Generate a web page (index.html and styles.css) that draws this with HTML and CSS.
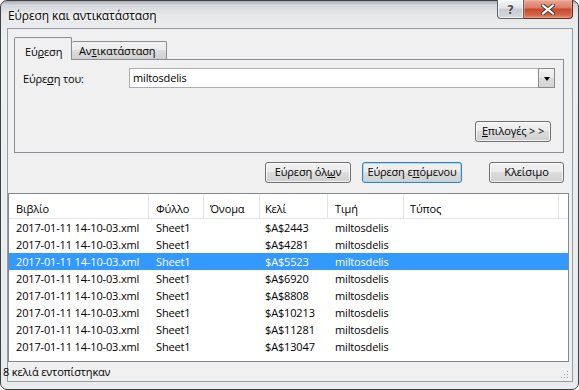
FILE: index.html
```html
<!DOCTYPE html>
<html lang="el">
<head>
<meta charset="utf-8">
<title>Εύρεση και αντικατάσταση</title>
<link rel="stylesheet" href="styles.css">
</head>
<body>
<div class="window">
  <div class="titlebar">
    <span class="title">Εύρεση και αντικατάσταση</span>
    <div class="caption">
      <div class="cap help"><span class="q">?</span></div>
      <div class="cap close">
        <svg width="14" height="11" viewBox="0 0 14 11">
          <path d="M2 1.5 L12 9.5 M12 1.5 L2 9.5" stroke="#3a3a3a" stroke-width="4" stroke-linecap="square" fill="none"/>
          <path d="M2 1.5 L12 9.5 M12 1.5 L2 9.5" stroke="#ffffff" stroke-width="2.2" stroke-linecap="square" fill="none"/>
        </svg>
      </div>
    </div>
  </div>
  <div class="client">
    <div class="tabs">
      <div class="tab active">Εύ<u>ρ</u>εση</div>
      <div class="tab inactive">Αν<u>τ</u>ικατάσταση</div>
    </div>
    <div class="panel">
      <div class="find-row">
        <span class="label">Εύρε<u>σ</u>η του:</span>
        <div class="combo">
          <span class="combo-text">miltosdelis</span>
          <span class="drop"><span class="tri"></span></span>
        </div>
      </div>
      <div class="options-row">
        <div class="btn btn-options"><u>Ε</u>πιλογές &gt; &gt;</div>
      </div>
    </div>
    <div class="actions">
      <div class="btn btn-all">Εύρεση όλ<u>ω</u>ν</div>
      <div class="btn btn-next default">Εύρεση ε<u>π</u>όμενου</div>
      <div class="btn btn-close">Κλείσιμο</div>
    </div>
    <div class="list">
      <div class="row header">
        <div class="cell">Βιβλίο</div>
        <div class="cell">Φύλλο</div>
        <div class="cell">Όνομα</div>
        <div class="cell">Κελί</div>
        <div class="cell">Τιμή</div>
        <div class="cell">Τύπος</div>
        <div class="cell last"></div>
      </div>
      <div class="row item"><div class="cell">2017-01-11 14-10-03.xml</div><div class="cell">Sheet1</div><div class="cell"></div><div class="cell">$A$2443</div><div class="cell">miltosdelis</div><div class="cell"></div><div class="cell"></div></div>
      <div class="row item"><div class="cell">2017-01-11 14-10-03.xml</div><div class="cell">Sheet1</div><div class="cell"></div><div class="cell">$A$4281</div><div class="cell">miltosdelis</div><div class="cell"></div><div class="cell"></div></div>
      <div class="row item selected"><div class="cell">2017-01-11 14-10-03.xml</div><div class="cell">Sheet1</div><div class="cell"></div><div class="cell">$A$5523</div><div class="cell">miltosdelis</div><div class="cell"></div><div class="cell"></div></div>
      <div class="row item"><div class="cell">2017-01-11 14-10-03.xml</div><div class="cell">Sheet1</div><div class="cell"></div><div class="cell">$A$6920</div><div class="cell">miltosdelis</div><div class="cell"></div><div class="cell"></div></div>
      <div class="row item"><div class="cell">2017-01-11 14-10-03.xml</div><div class="cell">Sheet1</div><div class="cell"></div><div class="cell">$A$8808</div><div class="cell">miltosdelis</div><div class="cell"></div><div class="cell"></div></div>
      <div class="row item"><div class="cell">2017-01-11 14-10-03.xml</div><div class="cell">Sheet1</div><div class="cell"></div><div class="cell">$A$10213</div><div class="cell">miltosdelis</div><div class="cell"></div><div class="cell"></div></div>
      <div class="row item"><div class="cell">2017-01-11 14-10-03.xml</div><div class="cell">Sheet1</div><div class="cell"></div><div class="cell">$A$11281</div><div class="cell">miltosdelis</div><div class="cell"></div><div class="cell"></div></div>
      <div class="row item"><div class="cell">2017-01-11 14-10-03.xml</div><div class="cell">Sheet1</div><div class="cell"></div><div class="cell">$A$13047</div><div class="cell">miltosdelis</div><div class="cell"></div><div class="cell"></div></div>
    </div>
    <div class="status">
      <span class="status-text">8 κελιά εντοπίστηκαν</span>
      <svg class="grip" width="8" height="8" viewBox="0 0 8 8">
        <rect x="6" y="0" width="1" height="1" fill="#9a9a9a"/>
        <rect x="3" y="3" width="1" height="1" fill="#9a9a9a"/>
        <rect x="6" y="3" width="1" height="1" fill="#9a9a9a"/>
        <rect x="0" y="6" width="1" height="1" fill="#9a9a9a"/>
        <rect x="3" y="6" width="1" height="1" fill="#9a9a9a"/>
        <rect x="6" y="6" width="1" height="1" fill="#9a9a9a"/>
      </svg>
    </div>
  </div>
  <div class="bottom-frame"></div>
</div>
</body>
</html>
```
FILE: styles.css
```css
* { box-sizing: border-box; }
html, body { margin: 0; padding: 0; }
body {
  width: 579px;
  height: 390px;
  background: #ffffff;
  font-family: "Open Sans", "Noto Sans", sans-serif;
  font-size: 11px;
  letter-spacing: -0.15px;
  color: #000;
  overflow: hidden;
}
u { text-decoration: underline; text-underline-offset: 1px; }

.window {
  width: 579px;
  height: 390px;
  border: 1px solid #3e4145;
  border-radius: 7px;
  background: linear-gradient(to bottom, #a7abb0 0px, #d4d7db 4px, #e6e8ea 14px, #eceef0 40px, #e9ebed 100%);
  display: flex;
  flex-direction: column;
}

.titlebar {
  height: 27px;
  flex: none;
  display: flex;
  align-items: flex-start;
  padding-left: 7px;
}
.title {
  margin-top: 7px;
  font-size: 12px;
  line-height: 16px;
  letter-spacing: -0.1px;
  text-shadow: 0 0 5px #ffffff, 0 0 2px #ffffff;
}
.caption {
  margin-left: auto;
  margin-right: 5px;
  margin-top: -1px;
  display: flex;
}
.cap {
  height: 19px;
  display: flex;
  align-items: center;
  justify-content: center;
}
.help {
  width: 27px;
  border: 1px solid #5e6368;
  border-top: none;
  border-radius: 0 0 0 4px;
  background: linear-gradient(to bottom, #f4f5f6 0%, #e1e4e7 45%, #c6cacf 50%, #d6dade 100%);
  box-shadow: inset 0 0 0 1px rgba(255,255,255,0.6);
}
.q {
  font-family: "DejaVu Sans", sans-serif;
  font-size: 12px;
  font-weight: bold;
  color: #4a4d52;
  text-shadow: 0 0 2px #fff, 0 0 1px #fff;
  line-height: 12px;
  margin-top: 1px;
}
.close {
  width: 49px;
  border: 1px solid #5b2c24;
  border-top: none;
  border-left: none;
  border-radius: 0 0 4px 0;
  background: linear-gradient(to bottom, #e9a897 0%, #db7a63 45%, #c8462d 50%, #d5694d 85%, #e08d6f 100%);
  box-shadow: inset 0 0 0 1px rgba(255,200,180,0.35);
}

.client {
  flex: none;
  height: 354px;
  margin: 0 5px 0 6px;
  border: 1px solid #969ba1;
  background: #f0f0f0;
  display: flex;
  flex-direction: column;
}
.bottom-frame { flex: 1; }

/* tabs */
.tabs {
  height: 22px;
  margin: 8px 0 0 6px;
  display: flex;
  align-items: flex-end;
  position: relative;
  z-index: 1;
}
.tab {
  border: 1px solid #898c95;
  border-bottom: none;
  border-radius: 2px 2px 0 0;
}
.tab.active {
  width: 58px;
  height: 23px;
  margin-bottom: -1px;
  padding: 6px 0 0 10px;
  line-height: 16px;
  background: #f0f0f0;
}
.tab.inactive {
  width: 95px;
  height: 18px;
  margin-left: 0;
  padding: 1px 0 0 7px;
  line-height: 16px;
  border-left: none;
  background: linear-gradient(to bottom, #f2f2f2 0%, #ebebeb 50%, #dddddd 50%, #cfcfcf 100%);
}

.panel {
  height: 94px;
  margin: 0 8px 0 6px;
  border: 1px solid #898c95;
  background: #f0f0f0;
  padding: 8px 8px 0 8px;
}
.find-row {
  display: flex;
  align-items: center;
  height: 20px;
}
.label {
  width: 106px;
  flex: none;
}
.combo {
  flex: 1;
  height: 20px;
  border: 1px solid #abadb3;
  border-right: none;
  background: #ffffff;
  display: flex;
  align-items: center;
}
.combo-text {
  flex: 1;
  padding-left: 3px;
  line-height: 16px;
}
.drop {
  width: 17px;
  height: 20px;
  margin-top: -1px;
  margin-bottom: -1px;
  border: 1px solid #8a8a8a;
  background: linear-gradient(to bottom, #f3f3f3 0%, #e8e8e8 50%, #dcdcdc 51%, #d4d4d4 100%);
  display: flex;
  align-items: center;
  justify-content: center;
}
.tri {
  width: 0;
  height: 0;
  border-left: 3.5px solid transparent;
  border-right: 3.5px solid transparent;
  border-top: 4px solid #000;
  margin-top: 1px;
}
.options-row {
  margin-top: 33px;
  display: flex;
  justify-content: flex-end;
  padding-right: 4px;
}

/* buttons */
.btn {
  height: 21px;
  border: 1px solid #707070;
  border-radius: 3px;
  background: linear-gradient(to bottom, #f2f2f2 0%, #ebebeb 50%, #dddddd 50%, #cfcfcf 100%);
  box-shadow: inset 0 0 0 1px rgba(255,255,255,0.75);
  display: flex;
  align-items: center;
  justify-content: center;
  line-height: 16px;
  padding-bottom: 1px;
}
.btn-options { width: 76px; }
.btn.default {
  border-color: #3c7fb1;
  box-shadow: inset 0 0 0 1px #a8d9f6;
}
.actions {
  height: 21px;
  margin: 9px 8px 0 0;
  display: flex;
  justify-content: flex-end;
}
.btn-all { width: 86px; }
.btn-next { width: 100px; margin-left: 11px; }
.btn-close { width: 75px; margin-left: 27px; }

/* list */
.list {
  height: 169px;
  margin: 10px 3px 0 0;
  border: 1px solid #828790;
  background: #ffffff;
}
.row {
  display: grid;
  grid-template-columns: 140px 55px 56px 68px 76px 155px 1fr;
}
.header {
  height: 25px;
  border-bottom: 1px solid #e5e5e5;
}
.header .cell {
  border-right: 1px solid #e5e5e5;
  padding-top: 4px;
  display: flex;
  align-items: center;
}
.header .cell.last { border-right: none; }
.cell {
  padding-left: 7px;
  white-space: nowrap;
  overflow: hidden;
}
.row .cell:nth-child(3) { padding-left: 6px; }
.row .cell:nth-child(4) { padding-left: 5px; }
.row .cell:nth-child(6) { padding-left: 6px; }
.item {
  height: 17px;
  line-height: 17px;
}
.item.selected {
  background: #3399ff;
  color: #ffffff;
}

.status {
  flex: 1;
  display: flex;
  align-items: center;
  position: relative;
}
.status-text {
  margin-left: -5px;
  line-height: 16px;
}
.grip {
  position: absolute;
  right: 3px;
  bottom: 2px;
}
```
